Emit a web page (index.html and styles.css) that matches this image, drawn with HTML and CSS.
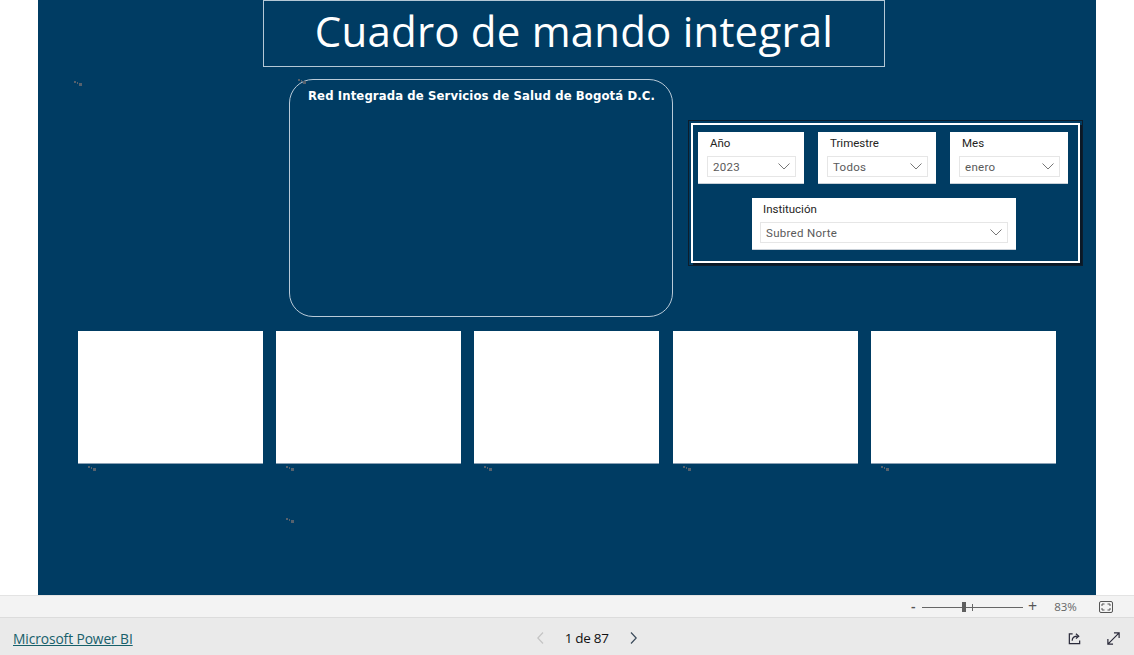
FILE: index.html
```html
<!DOCTYPE html>
<html lang="es">
<head>
<meta charset="utf-8">
<title>Cuadro de mando integral</title>
<link rel="stylesheet" href="styles.css">
</head>
<body>
<div class="viewport">
  <div class="canvas">
    <span class="dots dots-a"><i></i><i></i><i></i></span>
    <span class="dots dots-b"><i></i><i></i><i></i></span>
    <span class="dots dots-c"><i></i><i></i><i></i></span>

    <div class="title-box"><h1 class="title">Cuadro de mando integral</h1></div>

    <div class="mid-row">
      <div class="org-box">
        <div class="org-title">Red Integrada de Servicios de Salud de Bogotá D.C.</div>
      </div>

      <div class="slicers">
        <div class="slicers-inner">
          <div class="slicer-row">
            <div class="slicer s-year">
              <div class="slicer-label">Año</div>
              <div class="dropdown"><span>2023</span><svg class="chev" viewBox="0 0 12 7"><path d="M0.5 0.5 L6 6 L11.5 0.5"/></svg></div>
            </div>
            <div class="slicer s-q">
              <div class="slicer-label">Trimestre</div>
              <div class="dropdown"><span>Todos</span><svg class="chev" viewBox="0 0 12 7"><path d="M0.5 0.5 L6 6 L11.5 0.5"/></svg></div>
            </div>
            <div class="slicer s-m">
              <div class="slicer-label">Mes</div>
              <div class="dropdown"><span>enero</span><svg class="chev" viewBox="0 0 12 7"><path d="M0.5 0.5 L6 6 L11.5 0.5"/></svg></div>
            </div>
          </div>
          <div class="slicer-row row2">
            <div class="slicer s-inst">
              <div class="slicer-label">Institución</div>
              <div class="dropdown"><span>Subred Norte</span><svg class="chev" viewBox="0 0 12 7"><path d="M0.5 0.5 L6 6 L11.5 0.5"/></svg></div>
            </div>
          </div>
        </div>
      </div>
    </div>

    <div class="cards">
      <div class="card-wrap"><div class="card"></div><span class="dots"><i></i><i></i><i></i></span></div>
      <div class="card-wrap"><div class="card"></div><span class="dots"><i></i><i></i><i></i></span></div>
      <div class="card-wrap"><div class="card"></div><span class="dots"><i></i><i></i><i></i></span></div>
      <div class="card-wrap"><div class="card"></div><span class="dots"><i></i><i></i><i></i></span></div>
      <div class="card-wrap"><div class="card"></div><span class="dots"><i></i><i></i><i></i></span></div>
    </div>
  </div>
</div>

<div class="zoom-bar">
  <span class="zm minus">-</span>
  <span class="slider"><span class="track"></span><span class="tick"></span><span class="thumb"></span></span>
  <span class="zm plus">+</span>
  <span class="pct">83%</span>
  <svg class="fit" viewBox="0 0 14 12"><rect x="0.5" y="0.5" width="13" height="11" rx="1.5"/><path d="M3 5V3h2.5M8.5 3H11v2M11 7v2H8.5M5.5 9H3V7"/></svg>
</div>

<footer class="footer">
  <a class="brand" href="#">Microsoft Power BI</a>
  <div class="pager">
    <svg class="pg prev" viewBox="0 0 7 12"><path d="M6 0.5 L0.8 6 L6 11.5"/></svg>
    <span class="pg-text">1 de 87</span>
    <svg class="pg next" viewBox="0 0 7 12"><path d="M1 0.5 L6.2 6 L1 11.5"/></svg>
  </div>
  <div class="actions">
    <svg class="act share" viewBox="0 0 16 16"><path d="M6 3H2.5v10.5h11V10"/><path d="M5.5 10.5c0-3 2-5 6-5"/><path d="M9.5 3l3 2.5-3 2.5"/></svg>
    <svg class="act expand" viewBox="0 0 16 16"><path d="M2 14L14 2M8.5 2H14v5.5M2 8.5V14h5.5"/></svg>
  </div>
</footer>
</body>
</html>
```

FILE: styles.css
```css
* { box-sizing: border-box; }
html, body { margin: 0; padding: 0; }
body {
  background: #ffffff;
  width: 1134px;
  height: 655px;
  overflow: hidden;
  font-family: "Open Sans", "Noto Sans", sans-serif;
}

.viewport {
  height: 595px;
  display: flex;
  justify-content: flex-start;
  padding-left: 38px;
}

.canvas {
  position: relative;
  width: 1058px;
  height: 595px;
  background: #003c63;
}

/* little placeholder marks */
.dots {
  display: flex;
  align-items: flex-start;
  width: 9px;
  height: 5px;
}
.dots i {
  display: block;
  width: 2px;
  height: 2px;
  background: #56616d;
  margin-right: 1px;
}
.dots i:nth-child(2) { margin-top: 1px; }
.dots i:nth-child(3) { margin-top: 2px; width: 3px; height: 3px; }
.dots-a { position: absolute; left: 36px; top: 81px; }
.dots-b { position: absolute; left: 260px; top: 79px; }
.dots-c { position: absolute; left: 248px; top: 518px; }

.title-box {
  margin-left: 225px;
  width: 622px;
  height: 67px;
  border: 1px solid #b4c8d6;
  display: flex;
  align-items: center;
  justify-content: center;
}
.title {
  margin: 0;
  font-family: "Open Sans", sans-serif;
  font-weight: 400;
  font-size: 42px;
  color: #ffffff;
  letter-spacing: 0.2px;
  line-height: 1;
  padding-bottom: 5px;
}

.mid-row {
  display: flex;
  align-items: flex-start;
  margin-top: 12px;
}

.org-box {
  margin-left: 251px;
  width: 384px;
  height: 238px;
  border: 1px solid #b9cad8;
  border-radius: 24px;
  padding: 8px 0 0 18px;
}
.org-title {
  font-family: "DejaVu Sans Condensed", "DejaVu Sans", sans-serif;
  font-weight: bold;
  font-size: 13px;
  color: #ffffff;
  letter-spacing: 0.1px;
}

.slicers {
  margin-left: 15px;
  margin-top: 41px;
  width: 395px;
  height: 146px;
  border: 1px solid #0d1d2c;
  padding: 2px;
  background: #003c63;
}
.slicers-inner {
  width: 100%;
  height: 100%;
  border: 2px solid #ffffff;
  box-shadow: 2px 2px 0 #0a1826;
  padding: 7px 0 0 5px;
}
.slicer-row {
  display: flex;
  gap: 14px;
}
.row2 {
  margin-top: 14px;
  padding-left: 54px;
}
.slicer {
  background: #ffffff;
  height: 52px;
  padding: 4px 8px 0 9px;
  border-bottom: 1px solid #c8d0d8;
}
.s-year { width: 106px; }
.s-q { width: 118px; }
.s-m { width: 118px; }
.s-inst { width: 264px; padding-left: 8px; }

.slicer-label {
  font-family: "Roboto", "Open Sans", sans-serif;
  font-size: 11.5px;
  color: #252423;
  padding-left: 3px;
  height: 20px;
  line-height: 15px;
}
.dropdown {
  height: 21px;
  border: 1px solid #e6e6e6;
  display: flex;
  align-items: center;
  justify-content: space-between;
  padding: 0 5px 0 5px;
  font-family: "Roboto", "Open Sans", sans-serif;
  font-size: 11.5px;
  color: #5a5a5a;
  letter-spacing: 0.3px;
}
.chev {
  width: 12px;
  height: 7px;
  fill: none;
  stroke: #777;
  stroke-width: 1;
}

.cards {
  display: flex;
  gap: 13px;
  margin-top: 14px;
  padding-left: 40px;
}
.card-wrap { width: 185px; }
.card-wrap:nth-child(4) { margin-left: 1px; }
.card {
  height: 133px;
  background: #ffffff;
  border-bottom: 1px solid #8aa0b4;
}
.card-wrap .dots { margin: 2px 0 0 10px; }

/* zoom bar */
.zoom-bar {
  height: 23px;
  background: #f3f3f3;
  border-top: 1px solid #e3e3e3;
  border-bottom: 1px solid #dcdcdc;
  display: flex;
  align-items: center;
  padding-left: 911px;
  font-family: "Open Sans", sans-serif;
  color: #555;
}
.zm { font-size: 15px; line-height: 1; }
.minus { width: 10px; font-weight: 600; font-size: 14px; margin-top: -2px; }
.slider {
  position: relative;
  width: 101px;
  height: 12px;
  margin-left: 1px;
}
.track {
  position: absolute;
  left: 0; right: 0; top: 6px;
  height: 1px;
  background: #666;
}
.tick {
  position: absolute;
  left: 50px; top: 3px;
  width: 1px; height: 7px;
  background: #666;
}
.thumb {
  position: absolute;
  left: 40px; top: 1px;
  width: 4px; height: 10px;
  background: #5f5f5f;
}
.plus { margin-left: 5px; font-size: 16px; margin-top: -2px; }
.pct { margin-left: 17px; font-size: 11.5px; color: #666; }
.fit {
  margin-left: 22px;
  width: 14px;
  height: 12px;
  fill: none;
  stroke: #555;
  stroke-width: 1;
}

/* footer */
.footer {
  height: 37px;
  background: #eaeaea;
  display: flex;
  align-items: center;
  position: relative;
  padding: 3px 0 0 13px;
}
.brand {
  font-family: "Open Sans", sans-serif;
  font-size: 13.8px;
  color: #17606a;
  text-decoration: underline;
  letter-spacing: -0.1px;
}
.pager {
  display: flex;
  align-items: center;
  margin-left: 404px;
}
.pg {
  width: 7px;
  height: 12px;
  fill: none;
  stroke-width: 1.2;
}
.prev { stroke: #c4c4c4; }
.next { stroke: #3a4a5a; }
.pg-text {
  font-family: "Open Sans", sans-serif;
  font-size: 13.5px;
  color: #111;
  margin: 0 21px 0 21px;
  letter-spacing: -0.3px;
}
.actions {
  margin-left: auto;
  display: flex;
  gap: 24px;
  padding-right: 13px;
}
.act {
  width: 15px;
  height: 15px;
  fill: none;
  stroke: #2a2a3a;
  stroke-width: 1.3;
}
```
